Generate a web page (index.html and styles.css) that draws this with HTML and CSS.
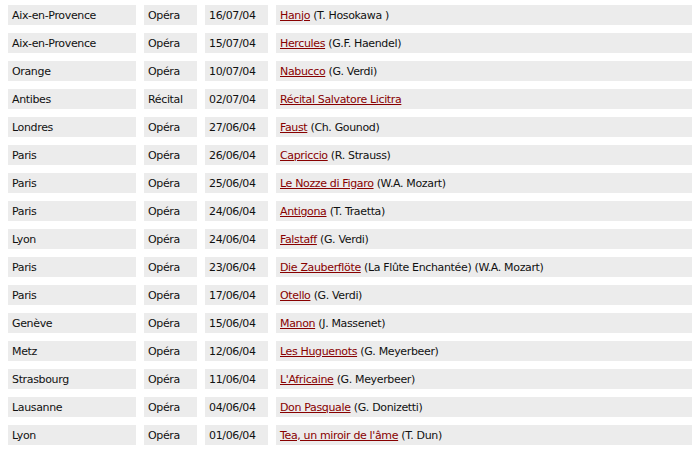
FILE: index.html
```html
<!DOCTYPE html>
<html lang="fr">
<head>
<meta charset="utf-8">
<title>Agenda</title>
<link rel="stylesheet" href="styles.css">
</head>
<body>
<table class="agenda">
  <colgroup>
    <col class="c-ville">
    <col class="c-genre">
    <col class="c-date">
    <col class="c-titre">
  </colgroup>
  <tbody>
    <tr><td>Aix-en-Provence</td><td>Opéra</td><td>16/07/04</td><td><a href="#">Hanjo</a> (T. Hosokawa )</td></tr>
    <tr><td>Aix-en-Provence</td><td>Opéra</td><td>15/07/04</td><td><a href="#">Hercules</a> (G.F. Haendel)</td></tr>
    <tr><td>Orange</td><td>Opéra</td><td>10/07/04</td><td><a href="#">Nabucco</a> (G. Verdi)</td></tr>
    <tr><td>Antibes</td><td>Récital</td><td>02/07/04</td><td><a href="#">Récital Salvatore Licitra</a></td></tr>
    <tr><td>Londres</td><td>Opéra</td><td>27/06/04</td><td><a href="#">Faust</a> (Ch. Gounod)</td></tr>
    <tr><td>Paris</td><td>Opéra</td><td>26/06/04</td><td><a href="#">Capriccio</a> (R. Strauss)</td></tr>
    <tr><td>Paris</td><td>Opéra</td><td>25/06/04</td><td><a href="#">Le Nozze di Figaro</a> (W.A. Mozart)</td></tr>
    <tr><td>Paris</td><td>Opéra</td><td>24/06/04</td><td><a href="#">Antigona</a> (T. Traetta)</td></tr>
    <tr><td>Lyon</td><td>Opéra</td><td>24/06/04</td><td><a href="#">Falstaff</a> (G. Verdi)</td></tr>
    <tr><td>Paris</td><td>Opéra</td><td>23/06/04</td><td><a href="#">Die Zauberflöte</a> (La Flûte Enchantée) (W.A. Mozart)</td></tr>
    <tr><td>Paris</td><td>Opéra</td><td>17/06/04</td><td><a href="#">Otello</a> (G. Verdi)</td></tr>
    <tr><td>Genève</td><td>Opéra</td><td>15/06/04</td><td><a href="#">Manon</a> (J. Massenet)</td></tr>
    <tr><td>Metz</td><td>Opéra</td><td>12/06/04</td><td><a href="#">Les Huguenots</a> (G. Meyerbeer)</td></tr>
    <tr><td>Strasbourg</td><td>Opéra</td><td>11/06/04</td><td><a href="#">L'Africaine</a> (G. Meyerbeer)</td></tr>
    <tr><td>Lausanne</td><td>Opéra</td><td>04/06/04</td><td><a href="#">Don Pasquale</a> (G. Donizetti)</td></tr>
    <tr><td>Lyon</td><td>Opéra</td><td>01/06/04</td><td><a href="#">Tea, un miroir de l'âme</a> (T. Dun)</td></tr>
  </tbody>
</table>
</body>
</html>
```
FILE: styles.css
```css
html, body {
  margin: 0;
  padding: 0;
  background: #ffffff;
}

body {
  font-family: "DejaVu Sans", Verdana, sans-serif;
  font-size: 11px;
  letter-spacing: -0.35px;
  color: #111111;
  overflow: hidden;
}

.agenda {
  border-collapse: separate;
  border-spacing: 8px;
  table-layout: fixed;
  width: 700px;
  margin-top: -3px;
}

.c-ville { width: 128px; }
.c-genre { width: 53px; }
.c-date { width: 63px; }
.c-titre { width: 416px; }

.agenda td {
  background: #ececec;
  height: 20px;
  padding: 1px 4px 0;
  vertical-align: middle;
  white-space: nowrap;
  line-height: 14px;
  box-sizing: border-box;
}

.agenda a {
  color: #880000;
  text-decoration: underline;
}
```
